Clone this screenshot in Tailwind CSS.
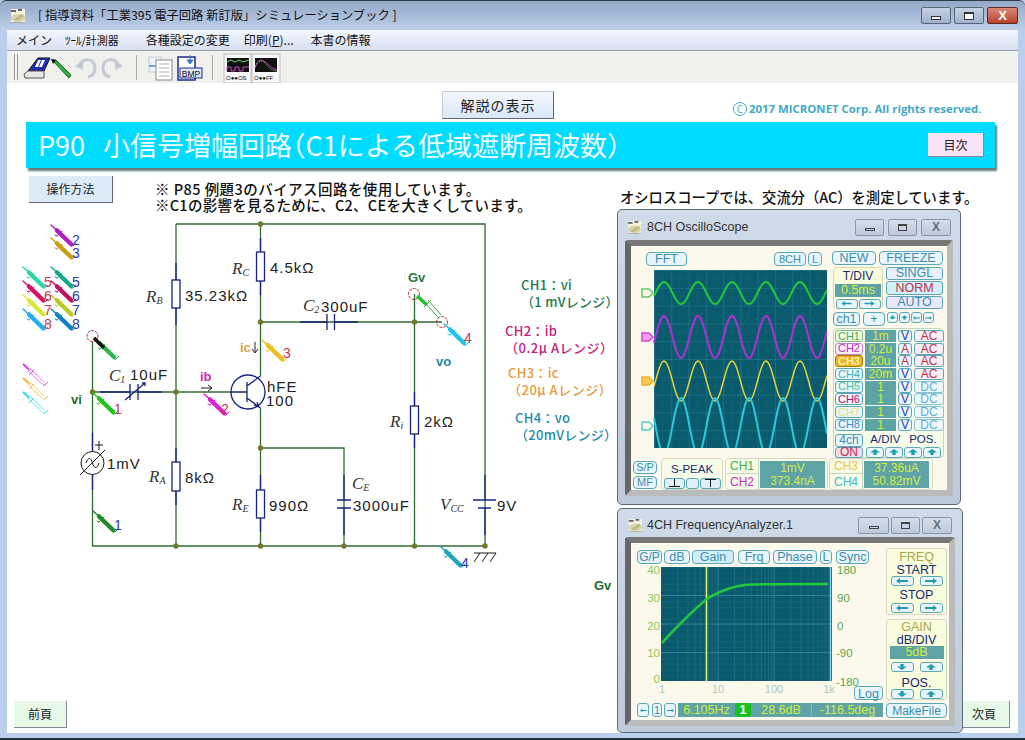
<!DOCTYPE html>
<html lang="ja">
<head>
<meta charset="UTF-8">
<title>シミュレーションブック</title>
<script src="https://cdn.jsdelivr.net/npm/@tailwindcss/browser@4"></script>
</head>
<body class="bg-white">
<svg class="hidden">
  <symbol id="al" viewBox="0 0 12 6"><path d="M0 3 4 0V2H12V4H4V6z" fill="#1f9db0"/></symbol>
  <symbol id="ar" viewBox="0 0 12 6"><path d="M12 3 8 0V2H0V4H8V6z" fill="#1f9db0"/></symbol>
  <symbol id="au" viewBox="0 0 12 7"><path d="M6 0 12 4H8V7H4V4H0z" fill="#1f9db0"/></symbol>
  <symbol id="ad" viewBox="0 0 12 7"><path d="M6 7 12 3H8V0H4V3H0z" fill="#1f9db0"/></symbol>
  <symbol id="appicon" viewBox="0 0 16 16">
    <rect x="1" y="1" width="14" height="14" fill="#f6f1dc"/>
    <path d="M1 2h5v2H1zM8 1h4v2H8z" fill="#666"/>
    <ellipse cx="8" cy="10" rx="7" ry="4" fill="#d9d4a8"/>
    <path d="M3 12 12 6l2 2-7 5z" fill="#bfb98a"/>
    <rect x="1" y="14" width="14" height="1" fill="#aaa"/>
  </symbol>
  <g id="probe" fill="none" stroke="currentColor" stroke-linecap="round">
    <path d="M0 0 6 5.500" stroke-width="1.500"/>
    <path d="M6 5.500 20 19" stroke-width="4.500"/>
    <path d="M6 11 11 6M6 11 4 10" stroke-width="1"/>
    <path d="M20 21 22 21 25 18" stroke-width="1"/>
  </g>
  <g id="ghost" fill="none" stroke="currentColor">
    <path d="M0 0 6 5.500" stroke-width="2"/>
    <path d="M6 5.500 20 19" stroke-width="4" stroke-opacity=".55"/>
    <path d="M7 6.500 20 19" stroke="#fff" stroke-width="2"/>
    <path d="M6 11 11 6M20 21 22 21 25 18" stroke-width="1"/>
  </g>
</svg>

<div class="relative w-[1025px] h-[740px] overflow-hidden flex flex-col bg-[#b9cfec] font-['Liberation_Sans','Noto_Sans_CJK_JP',sans-serif]">
  <!-- title bar -->
  <div class="h-[30px] shrink-0 flex items-center bg-gradient-to-b from-[#94a9c9] to-[#bccfe8] border-t border-[#2c3a4a] rounded-t-[6px] pl-[10px] pr-[7px]">
    <svg class="w-[16px] h-[16px]"><use href="#appicon"/></svg>
    <span class="ml-[12px] text-[12.300px] text-[#111] font-['Noto_Sans_CJK_JP',sans-serif]">[ 指導資料「工業395 電子回路 新訂版」シミュレーションブック ]</span>
    <div class="ml-auto flex gap-[3px]">
      <div class="w-[30px] h-[17px] rounded-[2px] border border-[#55657c] bg-gradient-to-b from-[#c6d3e6] to-[#9fb1ca] flex items-center justify-center"><span class="block w-[10px] h-[4px] border border-[#333] bg-white mt-[4px]"></span></div>
      <div class="w-[30px] h-[17px] rounded-[2px] border border-[#55657c] bg-gradient-to-b from-[#c6d3e6] to-[#9fb1ca] flex items-center justify-center"><span class="block w-[10px] h-[8px] border border-t-2 border-[#333] bg-white"></span></div>
      <div class="w-[31px] h-[17px] rounded-[2px] border border-[#5e2b22] bg-gradient-to-b from-[#d98a78] to-[#b8402c] flex items-center justify-center text-white font-bold text-[13px] leading-none">X</div>
    </div>
  </div>
  <!-- menu -->
  <div class="h-[21px] shrink-0 mx-[7px] flex items-center bg-gradient-to-b from-[#f3f6fc] to-[#d7dff1] border-b border-[#a0a0a0] text-[12px] text-[#111] font-['Noto_Sans_CJK_JP',sans-serif]">
    <span class="ml-[9px]">メイン</span>
    <span class="ml-[13px] text-[11px]">ﾂｰﾙ/計測器</span>
    <span class="ml-[27px]">各種設定の変更</span>
    <span class="ml-[14px]">印刷(<u>P</u>)...</span>
    <span class="ml-[17px]">本書の情報</span>
  </div>
  <!-- toolbar -->
  <div class="h-[32px] shrink-0 mx-[7px] bg-[#f0f0ec] flex items-center">
    <svg width="280" height="32" viewBox="7 51 280 32" class="shrink-0 overflow-visible">
      <path d="M14.500 54v26M17.500 54v26" stroke="#999" stroke-width="1"/>
      <path d="M28 71 38 58H50L44 71z" fill="#1d2fb0" stroke="#111"/>
      <path d="M38 60h3l-3 7h-3zM42 60h3l-3 7h-3z" fill="#fff"/>
      <path d="M24 74 28 71H44V78H25z" fill="#e8e8e8" stroke="#555"/>
      <path d="M52 60 56 60 71 75 69 78z" fill="#2ab53a" stroke="#1c5e24"/>
      <path d="M51 59 56 60 53 64z" fill="#111"/>
      <g fill="none" stroke="#c3cad6" stroke-width="3">
        <path d="M79 66c4-9 16-8 16 2 0 5-3 8-7 9"/>
        <path d="M119 66c-4-9-16-8-16 2 0 5 3 8 7 9"/>
      </g>
      <path d="M75 66 83 61 83 70zM123 66 115 61 115 70z" fill="#c3cad6"/>
      <path d="M136.500 55v25M212.500 55v25" stroke="#aaa"/>
      <rect x="149" y="57" width="12" height="15" fill="#eef2f8" stroke="#c7cdd6"/>
      <rect x="156" y="60" width="16" height="20" fill="#fff" stroke="#888"/>
      <path d="M159 64h10M159 68h10M159 72h10M159 76h10" stroke="#aaa"/>
      <path d="M149 66h7" stroke="#7da6d8" stroke-width="2"/>
      <rect x="178" y="57" width="17" height="23" fill="#fff" stroke="#1b2d8a" stroke-width="1.500"/>
      <path d="M190 55v8M187 60 190 64 193 60z" fill="#3a78d8" stroke="#3a78d8"/>
      <rect x="180" y="68" width="22" height="10" fill="#dfe6ff" stroke="#1b2d8a"/>
      <text x="191" y="76.500" text-anchor="middle" class="text-[8.500px] fill-[#111]">BMP</text>
      <g fill="#f8f8f8" stroke="#bbb"><rect x="224" y="54" width="27" height="29"/><rect x="252" y="54" width="28" height="29"/></g>
      <rect x="227" y="58" width="22" height="14" fill="#111"/>
      <path d="M227 62l4-2 4 2 4-2 4 2 6-2" stroke="#6fdc6f" fill="none"/>
      <path d="M227 71v-4h4v4h4v-4h4v4h4v-4h6" stroke="#c44ac4" fill="none"/>
      <rect x="255" y="58" width="22" height="14" fill="#111"/>
      <path d="M255 68c3-9 6-9 10-6s6 6 12 8" stroke="#c44ac4" fill="none"/>
      <path d="M255 66c4-7 8-6 11-2s6 7 11 7" stroke="#6fdc6f" fill="none" stroke-dasharray="1 1"/>
      <text x="226" y="80" class="text-[6px] fill-[#111]">O●●OS</text>
      <text x="254" y="80" class="text-[6px] fill-[#111]">O●●FF</text>
    </svg>
  </div>

  <!-- page -->
  <div class="flex-1 min-h-0 mx-[7px] bg-white flex flex-col">
    <div class="h-[36px] shrink-0 flex items-end relative">
      <button class="ml-[435px] w-[112px] h-[28px] bg-gradient-to-b from-[#f3f7fd] to-[#dbe7f8] border border-[#c4ccd6] border-r-[#667] border-b-[#667] text-[14px] tracking-[1px] text-[#222] font-['Noto_Sans_CJK_JP',sans-serif]">解説の表示</button>
      <span class="ml-[179px] mb-[3px] text-[11.400px] font-bold text-[#45a8c8] font-['Open_Sans',sans-serif] leading-none flex items-center gap-[2px]"><span class="w-[14px] h-[14px] rounded-full border border-[#45a8c8] flex items-center justify-center font-normal text-[10px] leading-none">C</span>2017 MICRONET Corp. All rights reserved.</span>
    </div>
    <div class="mt-[3px] ml-[19px] w-[969px] h-[46px] shrink-0 bg-[#00dcff] shadow-[2px_3px_2px_#5e7a80] flex items-center pl-[12px] pr-[11px]">
      <h1 class="text-[27px] text-[#f2fbff] whitespace-pre font-['Noto_Sans_CJK_JP',sans-serif]"><span class="mr-[18px]">P90</span>小信号増幅回路<span class="[font-feature-settings:'halt']">（</span>C1による低域遮断周波数<span class="[font-feature-settings:'halt']">）</span></h1>
      <button class="ml-auto w-[56px] h-[24px] bg-[#f9e3f7] border-b border-r border-[#889] text-[12px] text-[#222] font-['Noto_Sans_CJK_JP',sans-serif]">目次</button>
    </div>

    <div class="flex-1 min-h-0 flex">
      <!-- circuit canvas: viewBox uses screen coordinates -->
      <div class="relative w-[610px] h-[565px] shrink-0">
        <button class="absolute left-[22px] top-[8px] w-[84px] h-[27px] bg-[#dcebf8] border-b border-r border-[#667] text-[12px] text-[#222] font-['Noto_Sans_CJK_JP',sans-serif]">操作方法</button>
        <div class="absolute left-[148px] top-[13px] text-[14.500px] tracking-[0.3px] leading-[16px] font-medium text-[#111] whitespace-nowrap font-['Noto_Sans_CJK_JP',sans-serif]">
          <p class="tracking-[0.45px]">※ P85 例題3のバイアス回路を使用しています。</p>
          <p class="tracking-[0.25px]">※C1の影響を見るために、C2、CEを大きくしています。</p>
        </div>
        <svg width="610" height="565" viewBox="7 168 610 565" class="block overflow-visible">
          <!-- wires -->
          <g fill="none" stroke="#2f6b33" stroke-width="1.300">
            <path d="M176 224H485V546H92.500V336"/>
            <path d="M176 224V546M260.500 224V376M260.500 408V546M260.500 448H344V546"/>
            <path d="M92.500 392H232M260.500 322H442M414.500 294V546"/>
          </g>
          <!-- navy leads -->
          <g fill="none" stroke="#1a237e" stroke-width="1.300">
            <path d="M176 263V280M176 308V325M176 448V462M176 491V505"/>
            <path d="M260.500 238V252M260.500 281V295M260.500 475V490M260.500 518V532"/>
            <path d="M344 475V500M344 508V535M485 475V500M485 508V535"/>
            <path d="M414.500 392V406M414.500 434V448"/>
            <path d="M100 392H130M138 392H162M300 322H327M334 322H358"/>
            <path d="M92.500 433V451M92.500 475V490"/>
            <path d="M130 384V400M138 384V400M125 400 145 383M142 383H145V386"/>
            <path d="M327 314V330M334.500 314V330"/>
            <path d="M337 500H351M337 508H351M473 500H496M478 508H491"/>
            <rect x="172" y="280" width="8" height="28" fill="#fff"/>
            <rect x="172" y="462" width="8" height="29" fill="#fff"/>
            <rect x="256.500" y="252" width="8" height="29" fill="#fff"/>
            <rect x="256.500" y="490" width="8" height="28" fill="#fff"/>
            <rect x="410.500" y="406" width="8" height="28" fill="#fff"/>
            <circle cx="248" cy="392" r="17" fill="#fff"/>
            <path d="M231 392H247M247 382V402M247 386 260.500 376M247 398 260.500 408M254 405 259 407 257 402"/>
          </g>
          <!-- source -->
          <g fill="none" stroke="#1c1c1c" stroke-width="1">
            <circle cx="92.500" cy="463" r="11.500" fill="#fff"/>
            <path d="M80 475 105 450M86 463c2-6 5-6 6.500 0s4.500 6 6.500 0"/>
            <path d="M99 441v9M95 445h8"/>
            <path d="M474 553H496M480 553 474 562M488 553 482 562M496 553 490 562"/>
          </g>
          <!-- junctions -->
          <g fill="#6f7a2a">
            <circle cx="260.500" cy="224" r="2.700"/><circle cx="260.500" cy="322" r="2.700"/><circle cx="260.500" cy="448" r="2.700"/>
            <circle cx="92.500" cy="392" r="2.700"/><circle cx="176" cy="392" r="2.700"/><circle cx="414.500" cy="322" r="2.700"/>
            <circle cx="176" cy="546" r="2.700"/><circle cx="260.500" cy="546" r="2.700"/><circle cx="344" cy="546" r="2.700"/>
            <circle cx="414.500" cy="546" r="2.700"/><circle cx="485" cy="546" r="2.700"/>
          </g>
          <g fill="none" stroke="#c0303a" stroke-width="1" stroke-dasharray="3 1">
            <circle cx="92.500" cy="336" r="5.500" fill="#fff"/><circle cx="414" cy="294" r="5.500"/><circle cx="442" cy="322" r="5.500"/>
          </g>
          <!-- probes -->
          <use href="#probe" x="51" y="225" class="text-[#b01fc0]"/>
          <use href="#probe" x="51" y="238" class="text-[#c9a010]"/>
          <use href="#probe" x="23" y="267" class="text-[#2ed6a8]"/>
          <use href="#probe" x="51" y="267" class="text-[#17a88c]"/>
          <use href="#probe" x="23" y="281" class="text-[#d8106a]"/>
          <use href="#probe" x="51" y="281" class="text-[#c01060]"/>
          <use href="#probe" x="23" y="295" class="text-[#d6ea30]"/>
          <use href="#probe" x="51" y="295" class="text-[#b8cc20]"/>
          <use href="#probe" x="23" y="309" class="text-[#22aef0]"/>
          <use href="#probe" x="51" y="309" class="text-[#1280c8]"/>
          <use href="#ghost" x="23" y="364" class="text-[#e040e0]"/>
          <use href="#ghost" x="23" y="378" class="text-[#f0b830]"/>
          <use href="#ghost" x="23" y="392" class="text-[#30d8e8]"/>
          <use href="#probe" x="94" y="338" class="text-[#2fb84a]"/>
          <path d="M94 338 104 348" stroke="#111" stroke-width="3.500"/>
          <use href="#probe" x="93" y="393" class="text-[#1fc41f]"/>
          <use href="#probe" x="93" y="511" class="text-[#1f8a2a]"/>
          <use href="#probe" x="204" y="394" class="text-[#e020d8]"/>
          <use href="#probe" x="262" y="340" class="text-[#f0bc20]"/>
          <use href="#probe" x="444" y="324" class="text-[#20c4e4]"/>
          <use href="#probe" x="440" y="546" class="text-[#1fa4b8]"/>
          <path d="M417 296 427 305" stroke="#22c42c" stroke-width="3.500"/>
          <path d="M425 303 439 318M428 300 441 315M424 307 431 300" stroke="#4a9a50" fill="none"/>
          <!-- probe numbers -->
          <g class="text-[14px] font-['Liberation_Sans',sans-serif]">
            <g fill="#c23a50">
              <text x="44" y="287">5</text><text x="44" y="301">6</text><text x="44" y="315">7</text><text x="44" y="329">8</text>
              <text x="114" y="414">1</text><text x="221" y="414">2</text><text x="283" y="358">3</text><text x="464" y="343">4</text>
            </g>
            <g fill="#2a3cb0">
              <text x="72" y="245">2</text><text x="72" y="258">3</text><text x="72" y="287">5</text><text x="72" y="301">6</text><text x="72" y="315">7</text><text x="72" y="329">8</text>
              <text x="114" y="530">1</text><text x="461" y="568">4</text>
            </g>
          </g>
          <!-- values -->
          <g class="text-[15px] fill-[#222] font-['Liberation_Sans',sans-serif] tracking-[1px]">
            <text x="185" y="301">35.23kΩ</text>
            <text x="270" y="273">4.5kΩ</text>
            <text x="185" y="483">8kΩ</text>
            <text x="269" y="511">990Ω</text>
            <text x="424" y="427">2kΩ</text>
            <text x="321" y="312">300uF</text>
            <text x="353" y="511">3000uF</text>
            <text x="497" y="511">9V</text>
            <text x="107" y="469">1mV</text>
            <text x="130" y="380">10uF</text>
            <text x="267" y="392">hFE</text>
            <text x="266" y="406">100</text>
          </g>
          <!-- symbols -->
          <g class="text-[17px] italic fill-[#333] font-['Liberation_Serif',serif]">
            <text x="146" y="302">R<tspan font-size="10" dy="2">B</tspan></text>
            <text x="232" y="274">R<tspan font-size="10" dy="2">C</tspan></text>
            <text x="149" y="482">R<tspan font-size="10" dy="2">A</tspan></text>
            <text x="232" y="510">R<tspan font-size="10" dy="2">E</tspan></text>
            <text x="390" y="427">R<tspan font-size="10" dy="2">i</tspan></text>
            <text x="303" y="311">C<tspan font-size="10" dy="2">2</tspan></text>
            <text x="109" y="381">C<tspan font-size="10" dy="2">1</tspan></text>
            <text x="352" y="489">C<tspan font-size="10" dy="2">E</tspan></text>
            <text x="440" y="510">V<tspan font-size="10" dy="2">CC</tspan></text>
          </g>
          <!-- signal names -->
          <g class="text-[13px] font-bold font-['Liberation_Sans',sans-serif]">
            <text x="71" y="404" fill="#1f6b2a">vi</text>
            <text x="200" y="381" fill="#c92fa8">ib</text>
            <text x="240" y="352" fill="#e0a040">ic</text>
            <text x="408" y="282" fill="#2b7a3d">Gv</text>
            <text x="436" y="366" fill="#2088a8">vo</text>
            <text x="594" y="590" fill="#1f6b2a">Gv</text>
          </g>
          <path d="M201 388H212M208 385 212 388 208 391M255 342V352M252 349 255 353 258 349" fill="none" stroke="#222"/>
          <!-- channel legend -->
          <g class="text-[13px] font-medium font-['Noto_Sans_CJK_JP',sans-serif] tracking-[0.3px]">
            <text x="521" y="290" fill="#1a7a4a">CH1：vi</text>
            <text x="521" y="307" fill="#1a7a4a">（1 mVレンジ）</text>
            <text x="505" y="336" fill="#c4207a">CH2：ib</text>
            <text x="505" y="353" fill="#c4207a" class="tracking-[0.5px]">（0.2μ Aレンジ）</text>
            <text x="508" y="378" fill="#e69a3a">CH3：ic</text>
            <text x="508" y="395" fill="#e69a3a" class="tracking-[0.5px]">（20μ Aレンジ）</text>
            <text x="515" y="423" fill="#1f8aa8">CH4：vo</text>
            <text x="515" y="440" fill="#1f8aa8">（20mVレンジ）</text>
          </g>
        </svg>
        <button class="absolute left-[7px] top-[533px] w-[53px] h-[27px] bg-[#e6f8e8] border-b border-r border-[#889] text-[12px] text-[#222] font-['Noto_Sans_CJK_JP',sans-serif]">前頁</button>
      </div>

      <!-- instruments -->
      <div class="relative flex-1 min-w-0">
        <p class="mt-[19px] ml-[3px] h-[20px] leading-[20px] text-[14.300px] font-medium text-[#111] whitespace-nowrap font-['Noto_Sans_CJK_JP',sans-serif]">オシロスコープでは、交流分（AC）を測定しています。</p>
        <button class="absolute left-[340px] top-[533px] w-[53px] h-[27px] bg-[#e6f8e8] border-b border-r border-[#889] text-[12px] text-[#222] font-['Noto_Sans_CJK_JP',sans-serif] pl-[2px]">次頁</button>

        <!-- oscilloscope window -->
        <div class="relative mt-[2px] w-[344px] h-[296px] rounded-[5px] border border-[#5a6878] bg-gradient-to-b from-[#cfdbe9] to-[#bccadb] px-[7px] pb-[8px] flex flex-col">
          <div class="h-[30px] shrink-0 flex items-center pl-[2px] pt-[4px]">
            <svg class="w-[15px] h-[15px]"><use href="#appicon"/></svg>
            <span class="ml-[5px] text-[12.500px] text-[#333]">8CH OscilloScope</span>
            <div class="ml-auto mr-[2px] flex gap-[4px]">
              <div class="w-[29px] h-[17px] rounded-[2px] border border-[#8a97a8] bg-gradient-to-b from-[#d5dfeb] to-[#bdcadb] flex items-center justify-center"><span class="block w-[10px] h-[3px] border border-[#444] mt-[4px]"></span></div>
              <div class="w-[29px] h-[17px] rounded-[2px] border border-[#8a97a8] bg-gradient-to-b from-[#d5dfeb] to-[#bdcadb] flex items-center justify-center"><span class="block w-[9px] h-[7px] border border-t-2 border-[#444]"></span></div>
              <div class="w-[30px] h-[17px] rounded-[2px] border border-[#8a97a8] bg-gradient-to-b from-[#d5dfeb] to-[#bdcadb] flex items-center justify-center text-[12px] font-bold text-[#66707f] leading-none">X</div>
            </div>
          </div>
          <div class="rounded-[3px] border-[6px] border-t-[#777] border-l-[#666] border-r-[#bbb] border-b-[#bbb] bg-[#fdf8ec] w-[328px] h-[256px] text-[12.500px] leading-none text-[#3a8fb0]">
            <div class="flex h-[212px]">
              <div class="w-[197px]">
                <div class="h-[24px] flex items-start pt-[6px]">
                  <div class="ml-[15px] w-[41px] h-[14px] rounded-[4px] border border-[#5aa7b8] bg-[#e9f5fb] flex items-center justify-center">FFT</div>
                  <div class="ml-auto w-[32px] h-[14px] rounded-[4px] border border-[#5aa7b8] bg-[#e9f5fb] flex items-center justify-center text-[11px]">8CH</div>
                  <div class="ml-[2px] mr-[6px] w-[14px] h-[14px] rounded-[4px] border border-[#5aa7b8] bg-[#e9f5fb] flex items-center justify-center text-[11px]">L</div>
                </div>
                <svg id="scope" width="187" height="178" viewBox="640 269 187 178" class="ml-[9px] block overflow-hidden">
                  <defs>
                    <pattern id="sg" x="654" y="269" width="17.300" height="17.800" patternUnits="userSpaceOnUse">
                      <path d="M0 0H17.300M0 0V17.800" stroke="#2d8090" stroke-width="1"/>
                      <path d="M8.650 0V17.800M0 8.900H17.300" stroke="#1a6a7a" stroke-width="1" stroke-dasharray="1 2"/>
                    </pattern>
                  </defs>
                  <rect x="654" y="269" width="173" height="178" fill="#0a5a6e"/>
                  <rect x="654" y="269" width="173" height="178" fill="url(#sg)"/>
                  <g fill="none" stroke-width="2">
                    <polyline data-wave="292,11,0" stroke="#22c83c"/>
                    <polyline data-wave="336,21,0" stroke="#b030d8"/>
                    <polyline data-wave="380,20,0" stroke="#e4d238" stroke-width="1.500"/>
                    <polyline data-wave="425,28,17" stroke="#2cc8d8"/>
                  </g>
                  <g fill="#fdf8ec" stroke-width="1.500">
                    <path d="M642 288h7l4 4-4 4h-7z" stroke="#5ecb5e"/>
                    <path d="M642 332h7l4 4-4 4h-7z" stroke="#d048d8" fill="#f0a0f0"/>
                    <path d="M642 376h7l4 4-4 4h-7z" stroke="#f0b030" fill="#f8c850"/>
                    <path d="M642 421h7l4 4-4 4h-7z" stroke="#50cfd8"/>
                  </g>
                </svg>
              </div>
              <div class="ml-[4px] w-[112px] pt-[5px]">
                <div class="flex gap-[3px]">
                  <div class="w-[44px] h-[14px] rounded-[4px] border border-[#5aa7b8] bg-[#e9f5fb] flex items-center justify-center">NEW</div>
                  <div class="w-[64px] h-[14px] rounded-[4px] border border-[#5aa7b8] bg-[#e9f5fb] flex items-center justify-center">FREEZE</div>
                </div>
                <div class="mt-[2px] flex">
                  <div class="ml-[1px] w-[50px] h-[42px] rounded-[4px] border border-[#d8d8b0] bg-[#f8fbdc] flex flex-col items-center">
                    <span class="mt-[2px] text-[12px] text-[#1a2a70]">T/DIV</span>
                    <span class="mt-[2px] w-[46px] h-[13px] bg-[#5ea3a6] text-[#d4ee3c] flex items-center justify-center">0.5ms</span>
                    <div class="mt-[2px] flex gap-[1px]">
                      <span class="w-[22px] h-[10px] rounded-[3px] border border-[#5aa7b8] bg-[#e9f5fb] flex items-center justify-center"><svg class="w-[11px] h-[5px]"><use href="#al"/></svg></span>
                      <span class="w-[22px] h-[10px] rounded-[3px] border border-[#5aa7b8] bg-[#e9f5fb] flex items-center justify-center"><svg class="w-[11px] h-[5px]"><use href="#ar"/></svg></span>
                    </div>
                  </div>
                  <div class="ml-[3px] w-[57px] flex flex-col gap-[1px]">
                    <div class="h-[13px] rounded-[3px] border border-[#5aa7b8] bg-[#e9f0fb] flex items-center justify-center">SINGL</div>
                    <div class="h-[14px] rounded-[3px] border border-[#5aa7b8] bg-[#d4eefa] text-[#c0304a] flex items-center justify-center">NORM</div>
                    <div class="h-[13px] rounded-[3px] border border-[#5aa7b8] bg-[#ece8f8] flex items-center justify-center">AUTO</div>
                  </div>
                </div>
                <div class="mt-[3px] flex items-start">
                  <div class="ml-[1px] w-[27px] h-[14px] rounded-[4px] border border-[#5aa7b8] bg-[#e9f5fb] flex items-center justify-center">ch1</div>
                  <div class="ml-[3px] w-[22px] h-[14px] rounded-[4px] border border-[#5aa7b8] bg-[#e9f5fb] flex items-center justify-center">+</div>
                  <div class="ml-[2px] flex gap-[1px]">
                    <span class="w-[11px] h-[11px] rounded-[3px] border border-[#5aa7b8] bg-[#e9f5fb] flex items-center justify-center"><svg class="w-[7px] h-[5px]"><use href="#ad"/></svg></span>
                    <span class="w-[11px] h-[11px] rounded-[3px] border border-[#5aa7b8] bg-[#e9f5fb] flex items-center justify-center"><svg class="w-[7px] h-[5px]"><use href="#au"/></svg></span>
                    <span class="w-[11px] h-[11px] rounded-[3px] border border-[#5aa7b8] bg-[#e9f5fb] flex items-center justify-center"><svg class="w-[7px] h-[4px]"><use href="#al"/></svg></span>
                    <span class="w-[11px] h-[11px] rounded-[3px] border border-[#5aa7b8] bg-[#e9f5fb] flex items-center justify-center"><svg class="w-[7px] h-[4px]"><use href="#ar"/></svg></span>
                  </div>
                </div>
                <!-- channel table -->
                <div class="mt-[2px] ml-[1px] w-[111px] h-[130px] rounded-[4px] border border-[#c8d8c0] bg-[#f5fbe8] pt-[1px] text-[12px]">
                  <div class="grid grid-cols-[28px_31px_14px_30px] gap-x-[2px] auto-rows-[12.700px] pl-[1px]">
                    <span class="h-[12px] rounded-[3px] border border-[#7fc07f] text-[#40b040] bg-[#f0faf0] flex items-center justify-center text-[11px]">CH1</span><span class="h-[12px] bg-[#5ea3a6] text-[#d4ee3c] flex items-center justify-center">1m</span><span class="h-[12px] rounded-[3px] border border-[#5aa7b8] text-[#2a3cb0] bg-[#e9f5fb] flex items-center justify-center">V</span><span class="h-[12px] rounded-[3px] border border-[#5aa7b8] text-[#c0304a] bg-[#f8f0f4] flex items-center justify-center">AC</span>
                    <span class="h-[12px] rounded-[3px] border border-[#c080d0] text-[#c030c0] bg-[#fbeefb] flex items-center justify-center text-[11px]">CH2</span><span class="h-[12px] bg-[#5ea3a6] text-[#d4ee3c] flex items-center justify-center">0.2u</span><span class="h-[12px] rounded-[3px] border border-[#5aa7b8] text-[#c0304a] bg-[#e9f5fb] flex items-center justify-center">A</span><span class="h-[12px] rounded-[3px] border border-[#5aa7b8] text-[#c0304a] bg-[#f8f0f4] flex items-center justify-center">AC</span>
                    <span class="h-[12px] rounded-[3px] border border-[#b08010] text-[#fff8b0] bg-[#f0b020] font-bold flex items-center justify-center text-[11px]">CH3</span><span class="h-[12px] bg-[#5ea3a6] text-[#d4ee3c] flex items-center justify-center">20u</span><span class="h-[12px] rounded-[3px] border border-[#5aa7b8] text-[#c0304a] bg-[#e9f5fb] flex items-center justify-center">A</span><span class="h-[12px] rounded-[3px] border border-[#5aa7b8] text-[#c0304a] bg-[#f8f0f4] flex items-center justify-center">AC</span>
                    <span class="h-[12px] rounded-[3px] border border-[#5aa7b8] text-[#40b0c8] bg-[#e9f5fb] flex items-center justify-center text-[11px]">CH4</span><span class="h-[12px] bg-[#5ea3a6] text-[#d4ee3c] flex items-center justify-center">20m</span><span class="h-[12px] rounded-[3px] border border-[#5aa7b8] text-[#2a3cb0] bg-[#e9f5fb] flex items-center justify-center">V</span><span class="h-[12px] rounded-[3px] border border-[#5aa7b8] text-[#c0304a] bg-[#f8f0f4] flex items-center justify-center">AC</span>
                    <span class="h-[12px] rounded-[3px] border border-[#5aa7b8] text-[#40c8a0] bg-[#e9f5fb] flex items-center justify-center text-[11px]">CH5</span><span class="h-[12px] bg-[#5ea3a6] text-[#d4ee3c] flex items-center justify-center">1</span><span class="h-[12px] rounded-[3px] border border-[#5aa7b8] text-[#2a3cb0] bg-[#e9f5fb] flex items-center justify-center">V</span><span class="h-[12px] rounded-[3px] border border-[#8ac0d0] text-[#60b0d0] bg-[#eef8fb] flex items-center justify-center">DC</span>
                    <span class="h-[12px] rounded-[3px] border border-[#5aa7b8] text-[#c01070] bg-[#e9f5fb] flex items-center justify-center text-[11px]">CH6</span><span class="h-[12px] bg-[#5ea3a6] text-[#d4ee3c] flex items-center justify-center">1</span><span class="h-[12px] rounded-[3px] border border-[#5aa7b8] text-[#2a3cb0] bg-[#e9f5fb] flex items-center justify-center">V</span><span class="h-[12px] rounded-[3px] border border-[#8ac0d0] text-[#60b0d0] bg-[#eef8fb] flex items-center justify-center">DC</span>
                    <span class="h-[12px] rounded-[3px] border border-[#5aa7b8] text-[#e8e080] bg-[#e9f5fb] flex items-center justify-center text-[11px]">CH7</span><span class="h-[12px] bg-[#5ea3a6] text-[#d4ee3c] flex items-center justify-center">1</span><span class="h-[12px] rounded-[3px] border border-[#5aa7b8] text-[#2a3cb0] bg-[#e9f5fb] flex items-center justify-center">V</span><span class="h-[12px] rounded-[3px] border border-[#8ac0d0] text-[#60b0d0] bg-[#eef8fb] flex items-center justify-center">DC</span>
                    <span class="h-[12px] rounded-[3px] border border-[#5aa7b8] text-[#3a8fc8] bg-[#e9f5fb] flex items-center justify-center text-[11px]">CH8</span><span class="h-[12px] bg-[#5ea3a6] text-[#d4ee3c] flex items-center justify-center">1</span><span class="h-[12px] rounded-[3px] border border-[#5aa7b8] text-[#2a3cb0] bg-[#e9f5fb] flex items-center justify-center">V</span><span class="h-[12px] rounded-[3px] border border-[#8ac0d0] text-[#60b0d0] bg-[#eef8fb] flex items-center justify-center">DC</span>
                  </div>
                  <div class="mt-[2px] pl-[1px] flex">
                    <div class="w-[28px] flex flex-col">
                      <span class="h-[13px] rounded-[3px] border border-[#5aa7b8] bg-[#e9f5fb] flex items-center justify-center">4ch</span>
                      <span class="h-[11px] rounded-[3px] border border-[#5aa7b8] bg-[#f4dcec] text-[#c0304a] flex items-center justify-center">ON</span>
                    </div>
                    <div class="ml-[3px] flex-1 flex flex-col text-[11.500px] text-[#1a2a70]">
                      <div class="h-[13px] flex justify-around items-center pr-[2px]"><span>A/DIV</span><span>POS.</span></div>
                      <div class="h-[11px] flex gap-[1px]">
                        <span class="w-[18px] rounded-[3px] border border-[#5aa7b8] bg-[#e9f5fb] flex items-center justify-center"><svg class="w-[10px] h-[6px]"><use href="#au"/></svg></span>
                        <span class="w-[18px] rounded-[3px] border border-[#5aa7b8] bg-[#e9f5fb] flex items-center justify-center"><svg class="w-[10px] h-[6px]"><use href="#au"/></svg></span>
                        <span class="w-[18px] rounded-[3px] border border-[#5aa7b8] bg-[#e9f5fb] flex items-center justify-center"><svg class="w-[10px] h-[6px]"><use href="#au"/></svg></span>
                        <span class="w-[18px] rounded-[3px] border border-[#5aa7b8] bg-[#e9f5fb] flex items-center justify-center"><svg class="w-[10px] h-[6px]"><use href="#au"/></svg></span>
                      </div>
                    </div>
                  </div>
                </div>
              </div>
            </div>
            <!-- readouts -->
            <div class="h-[32px] pl-[2px] flex items-start">
              <div class="w-[24px] mt-[3px] flex flex-col gap-[2px]">
                <span class="h-[13px] rounded-[4px] border border-[#5aa7b8] bg-[#e9f5fb] flex items-center justify-center text-[11px]">S/P</span>
                <span class="h-[13px] rounded-[4px] border border-[#5aa7b8] bg-[#e9f5fb] flex items-center justify-center text-[11px]">MF</span>
              </div>
              <div class="ml-[4px] w-[62px] h-[32px] rounded-[4px] border border-[#d8d8c0] bg-[#f8fbe8] flex flex-col items-center text-[#1a2a70] text-[11.500px]">
                <span class="mt-[5px]">S-PEAK</span>
                <div class="mt-[2px] flex gap-[1px]">
                  <span class="w-[21px] h-[11px] rounded-[3px] border border-[#5aa7b8] bg-[#dff0f8] flex items-center justify-center"><svg width="11" height="8"><path d="M0 7.500H11M5.500 0V7.500" stroke="#111"/></svg></span>
                  <span class="w-[13px] h-[11px] rounded-[3px] border border-[#5aa7b8] bg-[#dff0f8]"></span>
                  <span class="w-[21px] h-[11px] rounded-[3px] border border-[#5aa7b8] bg-[#dff0f8] flex items-center justify-center"><svg width="11" height="8"><path d="M0 .500H11M5.500 0V8" stroke="#111"/></svg></span>
                </div>
              </div>
              <div class="ml-[2px] w-[103px] h-[32px] rounded-[4px] border border-[#d8d8c0] bg-[#f8fbe8] grid grid-cols-[33px_1fr] grid-rows-2 text-[12px]">
                <span class="text-[#40b040] flex items-center justify-center border-b border-r border-[#c8d8c0]">CH1</span><span class="ml-[1px] mr-[2px] mt-[2px] bg-[#5ea3a6] text-[#d4ee3c] flex items-center justify-center">1mV</span>
                <span class="text-[#c030c0] flex items-center justify-center border-r border-[#c8d8c0]">CH2</span><span class="ml-[1px] mr-[2px] mb-[1px] bg-[#5ea3a6] text-[#d4ee3c] flex items-center justify-center">373.4nA</span>
              </div>
              <div class="ml-[1px] w-[104px] h-[32px] rounded-[4px] border border-[#d8d8c0] bg-[#f8fbe8] grid grid-cols-[33px_1fr] grid-rows-2 text-[12px]">
                <span class="text-[#e8c840] flex items-center justify-center border-b border-r border-[#c8d8c0]">CH3</span><span class="ml-[1px] mr-[3px] mt-[2px] bg-[#5ea3a6] text-[#d4ee3c] flex items-center justify-center">37.36uA</span>
                <span class="text-[#40b8c8] flex items-center justify-center border-r border-[#c8d8c0]">CH4</span><span class="ml-[1px] mr-[3px] mb-[1px] bg-[#5ea3a6] text-[#d4ee3c] flex items-center justify-center">50.82mV</span>
              </div>
            </div>
          </div>
        </div>

        <!-- frequency analyzer window -->
        <div class="relative mt-[3px] w-[346px] h-[225px] rounded-[5px] border border-[#5a6878] bg-gradient-to-b from-[#cfdbe9] to-[#bccadb] px-[7px] flex flex-col">
          <div class="h-[28px] shrink-0 flex items-center pl-[3px] pt-[4px]">
            <svg class="w-[15px] h-[15px]"><use href="#appicon"/></svg>
            <span class="ml-[4px] text-[12.500px] text-[#333]">4CH FrequencyAnalyzer.1</span>
            <div class="ml-auto mr-[3px] flex gap-[2px]">
              <div class="w-[31px] h-[17px] rounded-[2px] border border-[#8a97a8] bg-gradient-to-b from-[#d5dfeb] to-[#bdcadb] flex items-center justify-center"><span class="block w-[10px] h-[3px] border border-[#444] mt-[4px]"></span></div>
              <div class="w-[29px] h-[17px] rounded-[2px] border border-[#8a97a8] bg-gradient-to-b from-[#d5dfeb] to-[#bdcadb] flex items-center justify-center"><span class="block w-[9px] h-[7px] border border-t-2 border-[#444]"></span></div>
              <div class="w-[30px] h-[17px] rounded-[2px] border border-[#8a97a8] bg-gradient-to-b from-[#d5dfeb] to-[#bdcadb] flex items-center justify-center text-[12px] font-bold text-[#66707f] leading-none">X</div>
            </div>
          </div>
          <div class="rounded-[3px] border-[6px] border-t-[#777] border-l-[#666] border-r-[#bbb] border-b-[#bbb] bg-[#fdf8ec] w-[330px] h-[189px] flex text-[12.500px] leading-none text-[#3a8fb0]">
            <div class="w-[255px]">
              <div class="mt-[7px] ml-[6px] h-[14px] flex">
                <span class="w-[25px] rounded-[4px] border border-[#5aa7b8] bg-[#e9f5fb] flex items-center justify-center text-[12px]">G/P</span>
                <span class="ml-[2px] w-[26px] rounded-[4px] border border-[#5aa7b8] bg-[#e9f5fb] flex items-center justify-center">dB</span>
                <span class="ml-[2px] w-[42px] rounded-[4px] border border-[#5aa7b8] bg-[#cfeefa] flex items-center justify-center">Gain</span>
                <span class="ml-[4px] w-[32px] rounded-[4px] border border-[#5aa7b8] bg-[#e9f5fb] flex items-center justify-center">Frq</span>
                <span class="ml-[3px] w-[44px] rounded-[4px] border border-[#5aa7b8] bg-[#e9f5fb] flex items-center justify-center">Phase</span>
                <span class="ml-[3px] w-[12px] rounded-[4px] border border-[#5aa7b8] bg-[#e9f5fb] flex items-center justify-center">L</span>
                <span class="ml-[4px] w-[33px] rounded-[4px] border border-[#5aa7b8] bg-[#e9f5fb] flex items-center justify-center">Sync</span>
              </div>
              <svg id="fra" width="255" height="137" viewBox="631 564 255 137" class="block">
                <defs>
                  <pattern id="fg" x="661" y="567" width="171" height="5.700" patternUnits="userSpaceOnUse">
                    <path d="M0 0H171" stroke="#1a6a7a"/>
                  </pattern>
                </defs>
                <rect x="661" y="567" width="171" height="114" fill="#0a5a6e"/>
                <rect x="661" y="567" width="171" height="114" fill="url(#fg)"/>
                <g id="logs" stroke="#1a6a7a"></g>
                <path d="M661 595.500H832M661 624H832M661 652.500H832M718 567V681M774 567V681" stroke="#2d8090"/>
                <path d="M706.500 567V681" stroke="#e8ee70" stroke-width="1.500"/>
                <path d="M830.500 567V681" stroke="#7fd8ee" stroke-width="1.500"/>
                <path d="M662 643C668 636 676 628 682 622S700 604 707 599 718 593 725 590 738 586 745 585 770 584 828 584" fill="none" stroke="#22c83c" stroke-width="2.500"/>
                <g class="text-[11.500px]" fill="#8cc850" text-anchor="end">
                  <text x="660" y="574">40</text><text x="660" y="602">30</text><text x="660" y="630">20</text><text x="660" y="657">10</text><text x="660" y="683">0</text>
                </g>
                <g class="text-[11.500px]" fill="#5aa84a">
                  <text x="837" y="574">180</text><text x="837" y="602">90</text><text x="837" y="630">0</text><text x="836" y="657">-90</text><text x="836" y="686">-180</text>
                </g>
                <g class="text-[11px]" fill="#a8c8b8" text-anchor="middle">
                  <text x="662" y="693">1</text><text x="718" y="693">10</text><text x="774" y="693">100</text><text x="829" y="693">1k</text>
                </g>
                <rect x="854.500" y="686.500" width="28" height="13" rx="3" fill="#e9f5fb" stroke="#5aa7b8"/>
                <text x="868.500" y="697.500" text-anchor="middle" class="text-[12.500px]" fill="#3a8fb0">Log</text>
              </svg>
              <div class="mt-[2px] ml-[6px] h-[14px] flex">
                <span class="w-[12px] rounded-[3px] border border-[#5aa7b8] bg-[#e9f5fb] flex items-center justify-center"><svg class="w-[7px] h-[5px]"><use href="#al"/></svg></span>
                <span class="ml-[3px] w-[10px] rounded-[3px] border border-[#5aa7b8] bg-[#e9f5fb] flex items-center justify-center text-[11px]">1</span>
                <span class="ml-[2px] w-[12px] rounded-[3px] border border-[#5aa7b8] bg-[#e9f5fb] flex items-center justify-center"><svg class="w-[7px] h-[5px]"><use href="#ar"/></svg></span>
                <div class="ml-[2px] w-[205px] bg-[#5ea3a6] text-[#d4ee3c] flex items-center">
                  <span class="w-[57px] text-center">6.105Hz</span>
                  <span class="w-[16px] h-[14px] rounded-[3px] bg-[#18c020] text-white font-bold flex items-center justify-center">1</span>
                  <span class="w-[61px] text-center border-r border-[#88b8b8]">28.6dB</span>
                  <span class="flex-1 text-center">-116.5deg</span>
                </div>
              </div>
            </div>
            <div class="w-[61px] pt-[5px] flex flex-col items-stretch text-[12.500px] text-[#1a2a70]">
              <div class="h-[67px] rounded-[3px] border border-[#d8d8c0] bg-[#f8fbdc] flex flex-col items-center">
                <span class="mt-[2px] text-[#a8a848]">FREQ</span>
                <span>START</span>
                <div class="flex gap-[6px]"><span class="w-[23px] h-[10px] rounded-[3px] border border-[#5aa7b8] bg-[#e9f5fb] flex items-center justify-center"><svg class="w-[12px] h-[6px]"><use href="#al"/></svg></span><span class="w-[23px] h-[10px] rounded-[3px] border border-[#5aa7b8] bg-[#e9f5fb] flex items-center justify-center"><svg class="w-[12px] h-[6px]"><use href="#ar"/></svg></span></div>
                <span class="mt-[3px]">STOP</span>
                <div class="mt-[1px] flex gap-[6px]"><span class="w-[23px] h-[10px] rounded-[3px] border border-[#5aa7b8] bg-[#e9f5fb] flex items-center justify-center"><svg class="w-[12px] h-[6px]"><use href="#al"/></svg></span><span class="w-[23px] h-[10px] rounded-[3px] border border-[#5aa7b8] bg-[#e9f5fb] flex items-center justify-center"><svg class="w-[12px] h-[6px]"><use href="#ar"/></svg></span></div>
              </div>
              <div class="mt-[4px] h-[81px] rounded-[3px] border border-[#d8d8c0] bg-[#f8fbdc] flex flex-col items-center">
                <span class="mt-[1px] text-[#a8a848]">GAIN</span>
                <span>dB/DIV</span>
                <span class="w-[54px] h-[13px] bg-[#5ea3a6] text-[#d4ee3c] flex items-center justify-center">5dB</span>
                <div class="mt-[3px] flex gap-[6px]"><span class="w-[23px] h-[10px] rounded-[3px] border border-[#5aa7b8] bg-[#e9f5fb] flex items-center justify-center"><svg class="w-[10px] h-[6px]"><use href="#ad"/></svg></span><span class="w-[23px] h-[10px] rounded-[3px] border border-[#5aa7b8] bg-[#e9f5fb] flex items-center justify-center"><svg class="w-[10px] h-[6px]"><use href="#au"/></svg></span></div>
                <span class="mt-[5px]">POS.</span>
                <div class="flex gap-[6px]"><span class="w-[23px] h-[10px] rounded-[3px] border border-[#5aa7b8] bg-[#e9f5fb] flex items-center justify-center"><svg class="w-[10px] h-[6px]"><use href="#ad"/></svg></span><span class="w-[23px] h-[10px] rounded-[3px] border border-[#5aa7b8] bg-[#e9f5fb] flex items-center justify-center"><svg class="w-[10px] h-[6px]"><use href="#au"/></svg></span></div>
              </div>
              <div class="mt-[3px] h-[15px] rounded-[4px] border border-[#5aa7b8] bg-[#e9f5fb] text-[#3a8fb0] flex items-center justify-center text-[12px]">MakeFile</div>
            </div>
          </div>
        </div>
      </div>
    </div>
  </div>
  <div class="h-[7px] shrink-0 border-b-2 border-[#1f2f3a] bg-[#b9cfec]"></div>
</div>

<script>
  // scope traces: centre y, amplitude, phase offset in px
  document.querySelectorAll('#scope polyline').forEach(line => {
    const [cy, amp, shift] = line.dataset.wave.split(',').map(Number);
    const pts = [];
    for (let x = 654; x <= 827; x += 1) {
      const y = cy - amp * Math.cos((x - 664 - shift) * 2 * Math.PI / 34);
      pts.push(x + ',' + y.toFixed(1));
    }
    line.setAttribute('points', pts.join(' '));
  });
  // log grid of the analyzer
  const logs = document.getElementById('logs');
  for (let d = 0; d < 3; d++) {
    for (let n = 2; n < 10; n++) {
      const x = 661 + 56.5 * (d + Math.log10(n));
      const l = document.createElementNS('http://www.w3.org/2000/svg', 'line');
      l.setAttribute('x1', x); l.setAttribute('x2', x);
      l.setAttribute('y1', 567); l.setAttribute('y2', 681);
      logs.appendChild(l);
    }
  }
</script>
</body>
</html>
